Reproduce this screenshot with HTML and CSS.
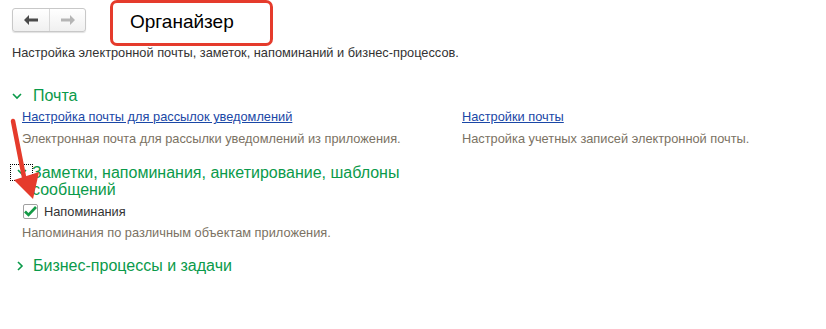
FILE: index.html
```html
<!DOCTYPE html>
<html lang="ru">
<head>
    <meta charset="UTF-8">
    <title>Органайзер</title>
    <link rel="stylesheet" href="styles.css">
</head>
<body>
    <div class="page">
        <header class="top">
            <div class="nav-buttons">
                <button class="nav-btn">
                    <svg width="14" height="10" viewBox="0 0 14 10"><path d="M0 5 L5 0 L5 3.5 L14 3.5 L14 6.5 L5 6.5 L5 10 Z" fill="#4a4a4a"/></svg>
                </button>
                <button class="nav-btn">
                    <svg width="14" height="10" viewBox="0 0 14 10"><path d="M14 5 L9 0 L9 3.5 L0 3.5 L0 6.5 L9 6.5 L9 10 Z" fill="#b5b5b5"/></svg>
                </button>
            </div>
            <div class="title-box">
                <h1>Органайзер</h1>
            </div>
        </header>

        <p class="intro">Настройка электронной почты, заметок, напоминаний и бизнес-процессов.</p>

        <section class="group">
            <h2 class="group-title">
                <svg class="chev" width="10" height="7" viewBox="0 0 10 7"><path d="M1 1 L5 5 L9 1" fill="none" stroke="#0a9a4a" stroke-width="1.6"/></svg>
                Почта
            </h2>
            <div class="columns">
                <div class="item">
                    <a href="#">Настройка почты для рассылок уведомлений</a>
                    <p class="hint">Электронная почта для рассылки уведомлений из приложения.</p>
                </div>
                <div class="item">
                    <a href="#">Настройки почты</a>
                    <p class="hint">Настройка учетных записей электронной почты.</p>
                </div>
            </div>
        </section>

        <section class="group">
            <h2 class="group-title wrap">
                <span class="focus">
                    <svg class="chev" width="10" height="7" viewBox="0 0 10 7"><path d="M1 1 L5 5 L9 1" fill="none" stroke="#0a9a4a" stroke-width="1.6"/></svg>
                </span>
                <span class="wrap-text">Заметки, напоминания, анкетирование, шаблоны сообщений</span>
            </h2>
            <label class="check">
                <span class="box">
                    <svg width="13" height="11" viewBox="0 0 13 11"><path d="M1 5.5 L4.5 9 L12 1" fill="none" stroke="#149a46" stroke-width="2.6"/></svg>
                </span>
                Напоминания
            </label>
            <p class="hint solo">Напоминания по различным объектам приложения.</p>
        </section>

        <section class="group">
            <h2 class="group-title">
                <svg class="chev right" width="7" height="10" viewBox="0 0 7 10"><path d="M1 1 L5 5 L1 9" fill="none" stroke="#0a9a4a" stroke-width="1.6"/></svg>
                Бизнес-процессы и задачи
            </h2>
        </section>

        <svg class="pointer" width="60" height="100" viewBox="0 110 60 100">
            <path d="M13 121 L24 177" stroke="#e53b2c" stroke-width="4.5" stroke-linecap="round"/>
            <path d="M14 180 L39 172 L33 199 Z" fill="#e53b2c"/>
        </svg>
    </div>
</body>
</html>
```

FILE: styles.css
```css
body {
    margin: 0;
    font-family: "Liberation Sans", Arial, sans-serif;
    font-size: 12.8px;
    color: #333;
    background: #fff;
}

.page {
    position: relative;
    padding: 0 12px;
}

.top {
    display: flex;
    align-items: flex-start;
    height: 45px;
}

.nav-buttons {
    display: flex;
    margin-top: 8px;
    border: 1px solid #c8c8c8;
    border-radius: 3px;
    background: linear-gradient(#ffffff, #f0f0f0);
    box-shadow: 0 1px 1px rgba(0, 0, 0, 0.12);
}

.nav-btn {
    width: 36px;
    height: 22px;
    border: none;
    background: transparent;
    padding: 0;
    display: flex;
    align-items: center;
    justify-content: center;
}

.nav-btn + .nav-btn {
    border-left: 1px solid #d8d8d8;
}

.title-box {
    margin-left: 24px;
    width: 140px;
    height: 40px;
    padding-left: 17px;
    border: 3px solid #e53b2c;
    border-radius: 7px;
    box-sizing: content-box;
}

.title-box h1 {
    margin: 8px 0 0;
    font-size: 19px;
    font-weight: normal;
    color: #000;
}

.intro {
    margin: 0;
    line-height: 15px;
}

.group-title {
    display: flex;
    align-items: center;
    margin: 0;
    font-size: 16px;
    font-weight: normal;
    color: #0a9a4a;
}

.group:nth-of-type(1) .group-title {
    margin-top: 27px;
}

.chev {
    margin: 0 11px 0 0;
}

.chev.right {
    margin: 0 9px 0 5px;
}

.columns {
    display: grid;
    grid-template-columns: 440px 1fr;
    padding-left: 10px;
    margin-top: 4px;
}

.item a {
    color: #1a47a6;
}

.hint {
    margin: 7px 0 0;
    color: #7b7263;
}

.wrap {
    align-items: flex-start;
    margin-top: 18px !important;
    line-height: 17px;
}

.focus {
    display: flex;
    align-items: center;
    justify-content: center;
    width: 21px;
    height: 15px;
    margin: 1px 0 0 -1px;
    outline: 1px dotted #000;
}

.focus .chev {
    margin: 0;
}

.wrap-text {
    width: 375px;
}

.check {
    display: flex;
    align-items: center;
    margin: 6px 0 0 11px;
    color: #333;
}

.box {
    width: 13px;
    height: 13px;
    border: 1px solid #a0a0a0;
    border-radius: 2px;
    margin-right: 6px;
    display: flex;
    align-items: center;
    justify-content: center;
    background: #fff;
}

.hint.solo {
    margin: 6px 0 0 10px;
}

.group:nth-of-type(3) .group-title {
    margin-top: 17px;
}

.pointer {
    position: absolute;
    left: 0;
    top: 110px;
}
```
